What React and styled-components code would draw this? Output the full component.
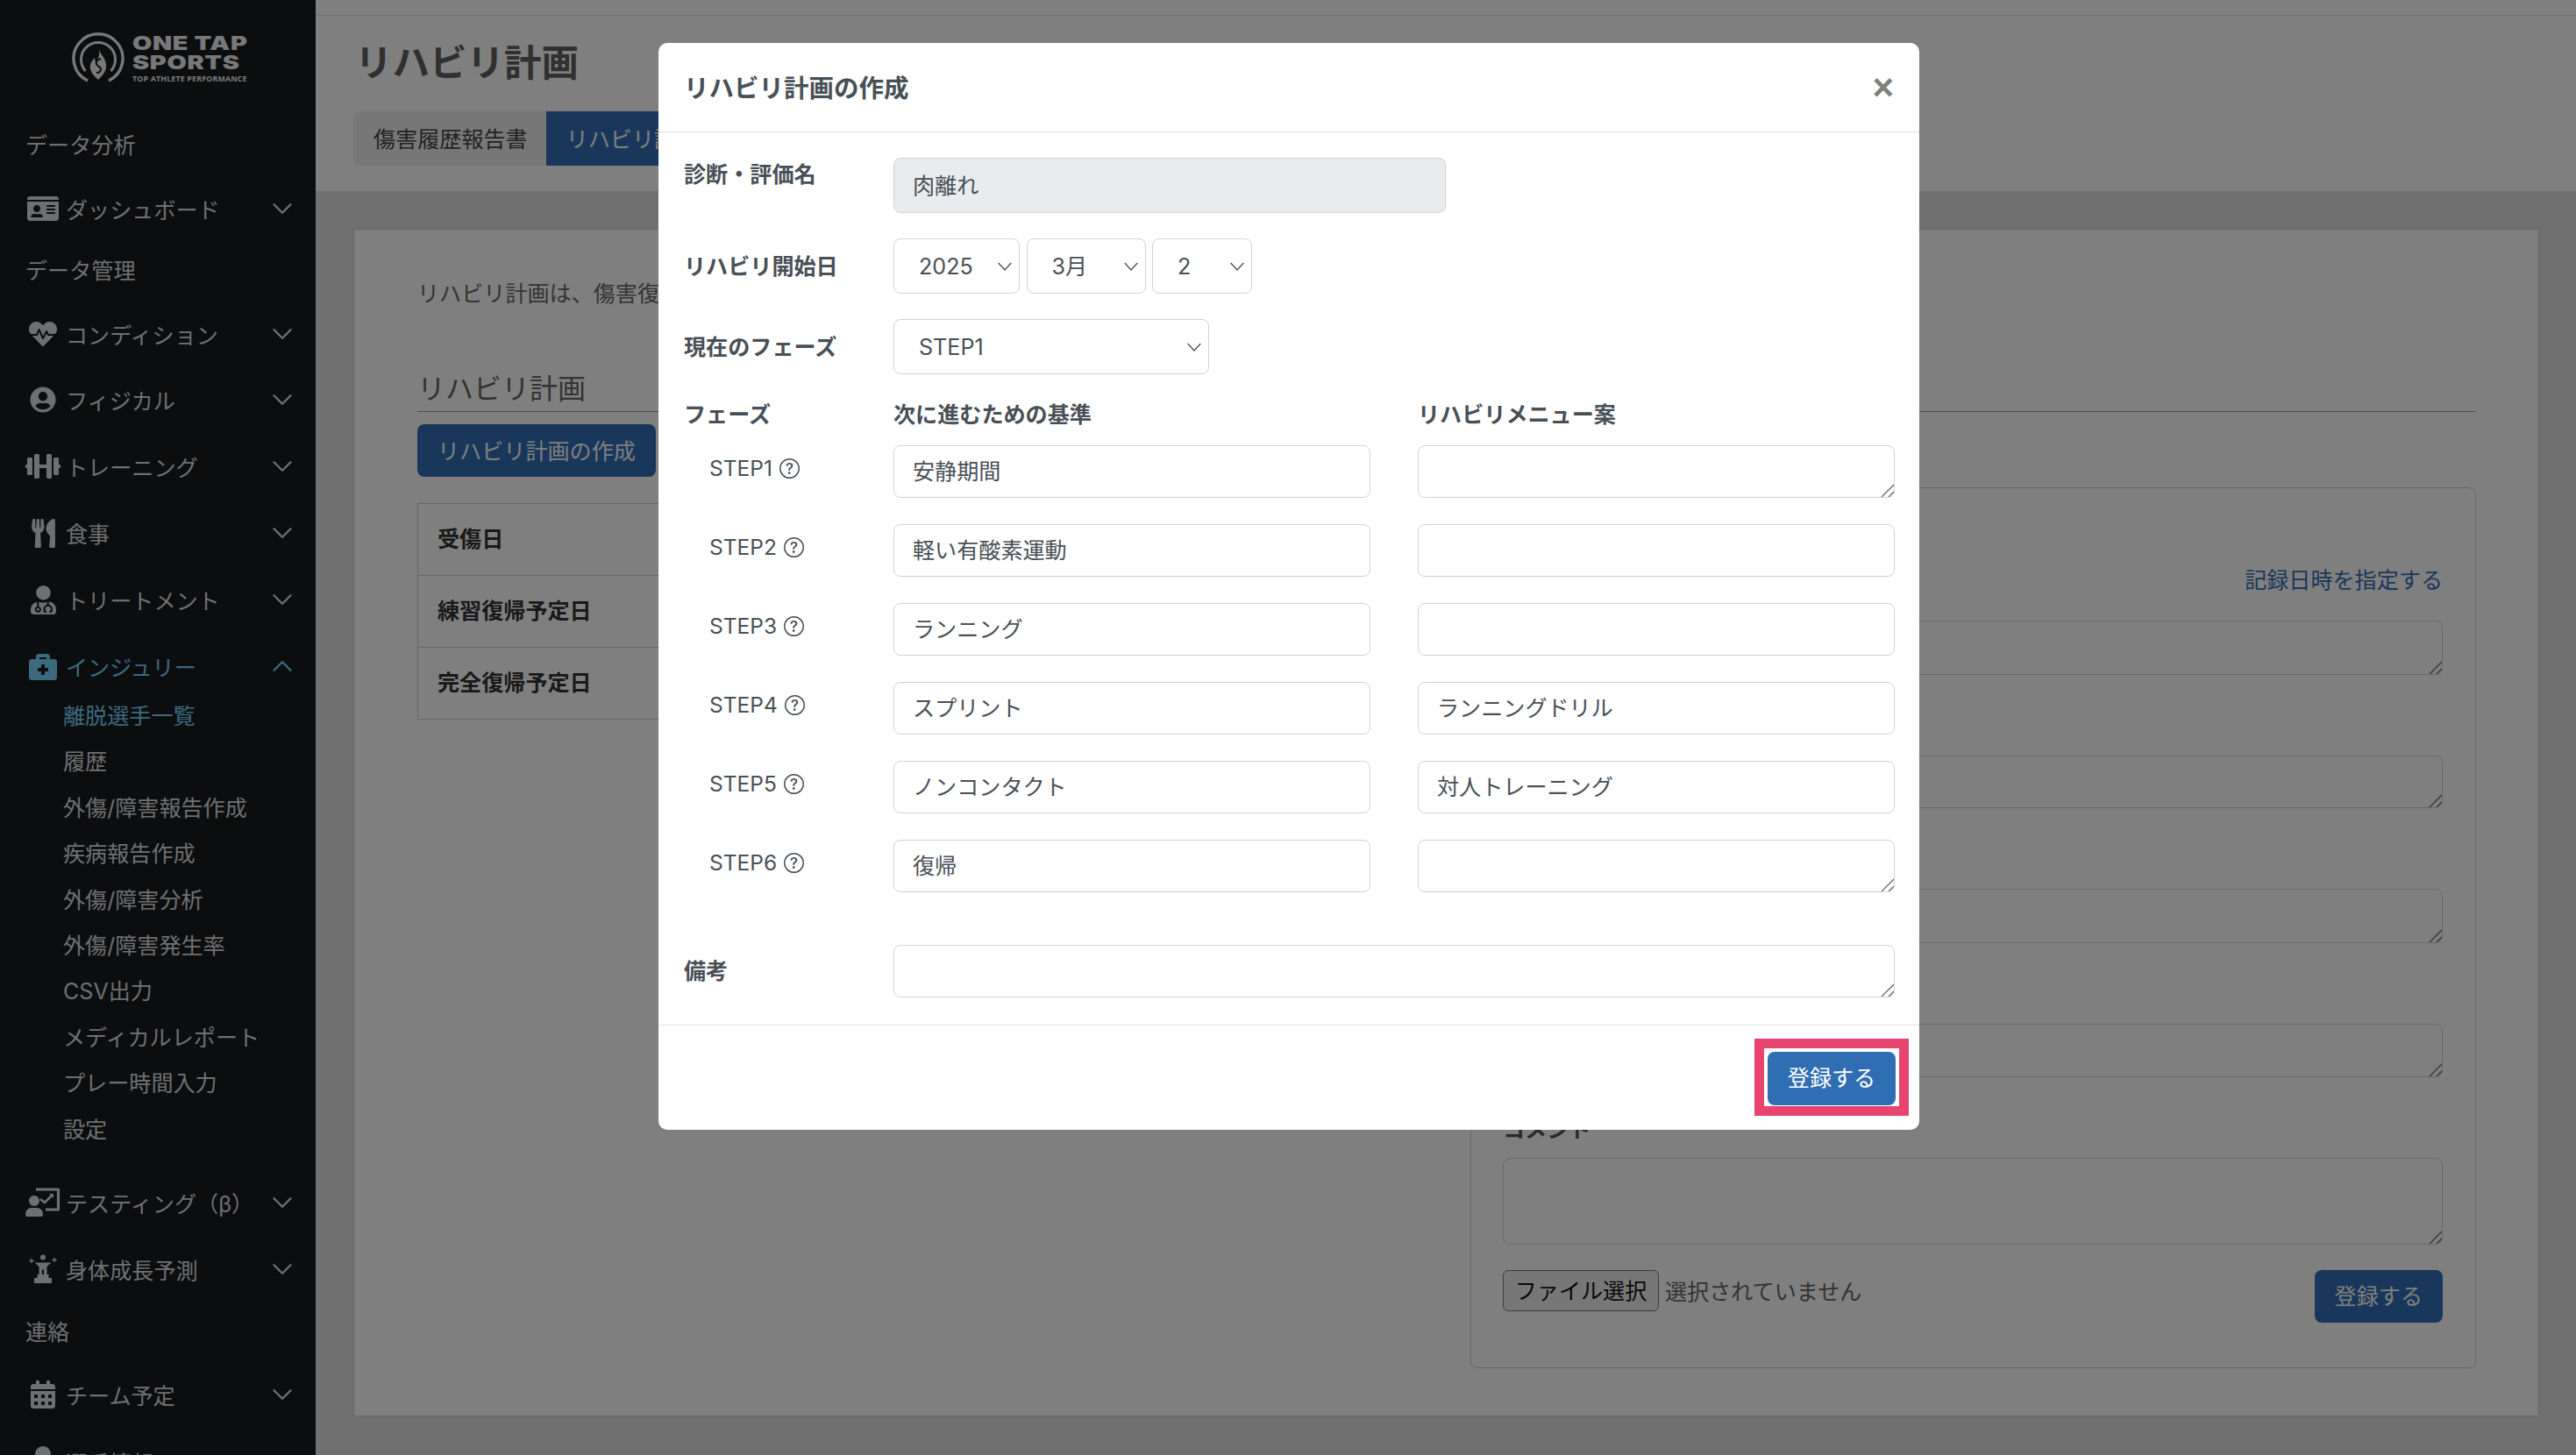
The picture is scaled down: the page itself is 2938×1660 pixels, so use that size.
import React from "react";
import styled, { createGlobalStyle } from "styled-components";
import { ChevronDown, ChevronUp } from "lucide-react";
import {
  FaIdCard,
  FaHeartbeat,
  FaUserCircle,
  FaDumbbell,
  FaUtensils,
  FaUserMd,
  FaBriefcaseMedical,
  FaCalendarAlt,
  FaUser,
} from "react-icons/fa";
import { BsQuestionCircle } from "react-icons/bs";

const GlobalStyle = createGlobalStyle`
  html, body {
    margin: 0;
    height: 100%;
    overflow: hidden;
  }
  body {
    font-family: Inter, "Noto Sans CJK JP", sans-serif;
    font-size: 25.1px;
    color: #495057;
  }
  * {
    box-sizing: border-box;
  }
`;

const chevron =
  "url(\"data:image/svg+xml,%3csvg xmlns='http://www.w3.org/2000/svg' viewBox='0 0 16 16'%3e%3cpath fill='none' stroke='%23495057' stroke-width='1.2' d='M1.5 4.5 8 11.5l6.5-7'/%3e%3c/svg%3e\")";

const grip =
  "url(\"data:image/svg+xml,%3csvg xmlns='http://www.w3.org/2000/svg' viewBox='0 0 15 15'%3e%3cpath stroke='%23666' stroke-width='1.3' d='M1 15 15 1M9 15 15 9'/%3e%3c/svg%3e\")";

const TestingIcon = () => (
  <svg width="40" height="33" viewBox="0 0 40 33" fill="currentColor">
    <path d="M12 2h25.5v23H23" fill="none" stroke="currentColor" strokeWidth="3.2" strokeLinejoin="round" />
    <path d="M17 13l5 4 9-9" fill="none" stroke="currentColor" strokeWidth="2.6" />
    <path d="M27 7h5v5z" />
    <circle cx="10" cy="15" r="6" />
    <path d="M0 30a7 7 0 0 1 7-7h6a7 7 0 0 1 7 7v1a2 2 0 0 1-2 2H2a2 2 0 0 1-2-2z" />
  </svg>
);

const GrowthIcon = () => (
  <svg width="32" height="33" viewBox="0 0 32 33" fill="currentColor">
    <circle cx="16" cy="3.6" r="3" />
    <path d="M6.5 9.5h19l-5 4.5v9.5h-3.4v-6h-2.2v6h-3.4V14z" />
    <rect x="6" y="27" width="20" height="6" rx="0.6" />
    <rect x="9.5" y="23" width="13" height="4" />
    <path d="M3 4l.9 2.6L6.4 7.5l-2.5.9L3 11l-.9-2.6L-.4 7.5l2.5-.9zM29 3l.9 2.6 2.5.9-2.5.9L29 10l-.9-2.6-2.5-.9 2.5-.9z" />
  </svg>
);

const LogoMark = () => (
  <svg width="60" height="60" viewBox="0 0 60 60">
    <path d="M18 56A28 28 0 1 1 42 56" fill="none" stroke="currentColor" strokeWidth="3.4" />
    <path d="M15.5 45A19.5 19.5 0 1 1 44.5 45" fill="none" stroke="currentColor" strokeWidth="3" />
    <path d="M31 20c1 6 9 11 8 21-1 6-5 10-9 14-4-4-8-7-9-13-1-5 2-9 5-12 0 3 1 4 2 5 2-4 4-9 3-15z" fill="currentColor" />
    <path d="M33 31c-4 1-6 3-5 6s5 3 5 6-2 4-5 4" fill="none" stroke="#161a1c" strokeWidth="2" />
  </svg>
);

const NAV_TOP = [
  { label: "データ分析", h: 72, section: true },
  { label: "ダッシュボード", h: 72, icon: <FaIdCard size={36} /> },
  { label: "データ管理", h: 70, section: true },
  { label: "コンディション", h: 74, icon: <FaHeartbeat size={32} /> },
  { label: "フィジカル", h: 76, icon: <FaUserCircle size={30} /> },
  { label: "トレーニング", h: 76, icon: <FaDumbbell size={40} /> },
  { label: "食事", h: 76, icon: <FaUtensils size={33} /> },
  { label: "トリートメント", h: 76, icon: <FaUserMd size={33} /> },
  { label: "インジュリー", h: 75, active: true, icon: <FaBriefcaseMedical size={32} /> },
];

const NAV_SUB = [
  "離脱選手一覧",
  "履歴",
  "外傷/障害報告作成",
  "疾病報告作成",
  "外傷/障害分析",
  "外傷/障害発生率",
  "CSV出力",
  "メディカルレポート",
  "プレー時間入力",
  "設定",
];

const NAV_BOTTOM = [
  { label: "テスティング（β）", h: 74, icon: <TestingIcon /> },
  { label: "身体成長予測", h: 78, icon: <GrowthIcon /> },
  { label: "連絡", h: 66, section: true },
  { label: "チーム予定", h: 76, icon: <FaCalendarAlt size={32} /> },
  { label: "選手情報", h: 78, icon: <FaUser size={36} /> },
];

const STEPS = [
  { name: "STEP1", criteria: "安静期間", menu: "", area: true },
  { name: "STEP2", criteria: "軽い有酸素運動", menu: "" },
  { name: "STEP3", criteria: "ランニング", menu: "" },
  { name: "STEP4", criteria: "スプリント", menu: "ランニングドリル" },
  { name: "STEP5", criteria: "ノンコンタクト", menu: "対人トレーニング" },
  { name: "STEP6", criteria: "復帰", menu: "", area: true },
];

const NavRow = ({ item }) => {
  if (item.section) {
    return <SectionLabel $h={item.h}>{item.label}</SectionLabel>;
  }
  return (
    <NavItem $h={item.h} $active={item.active}>
      <NavIcon>{item.icon}</NavIcon>
      <NavText>{item.label}</NavText>
      {item.active ? <ChevronUp size={38} strokeWidth={1.5} /> : <ChevronDown size={38} strokeWidth={1.5} />}
    </NavItem>
  );
};

const App = () => {
  return (
    <Page>
      <GlobalStyle />
      <Sidebar>
        <LogoBlock>
          <LogoMark />
          <LogoWords>
            <LogoLine>ONE TAP</LogoLine>
            <LogoLine>SPORTS</LogoLine>
            <LogoTag>TOP ATHLETE PERFORMANCE</LogoTag>
          </LogoWords>
        </LogoBlock>
        {NAV_TOP.map((item) => (
          <NavRow key={item.label} item={item} />
        ))}
        <SubList>
          {NAV_SUB.map((label, i) => (
            <SubItem key={label} $active={i === 0}>
              {label}
            </SubItem>
          ))}
        </SubList>
        {NAV_BOTTOM.map((item) => (
          <NavRow key={item.label} item={item} />
        ))}
      </Sidebar>

      <Main>
        <TopBar />
        <PageHead>
          <PageTitle>リハビリ計画</PageTitle>
          <Tabs>
            <Tab>傷害履歴報告書</Tab>
            <Tab $active>リハビリ計画</Tab>
          </Tabs>
        </PageHead>

        <Card>
          <Intro>リハビリ計画は、傷害復帰までの計画を作成する機能です。</Intro>
          <SectionHeading>リハビリ計画</SectionHeading>
          <Columns>
            <div>
              <PrimaryButton>リハビリ計画の作成</PrimaryButton>
              <InfoTable>
                <tbody>
                  <tr>
                    <th>受傷日</th>
                    <td />
                  </tr>
                  <tr>
                    <th>練習復帰予定日</th>
                    <td />
                  </tr>
                  <tr>
                    <th>完全復帰予定日</th>
                    <td />
                  </tr>
                </tbody>
              </InfoTable>
            </div>
            <RecordPanel>
              <RecordLink>記録日時を指定する</RecordLink>
              <NoteArea $mt={27.5} $h={62} />
              <NoteArea $mt={92} $h={60} />
              <NoteArea $mt={92} $h={62} />
              <NoteArea $mt={92} $h={61} />
              <FieldLabel>コメント</FieldLabel>
              <NoteArea $h={99} />
              <FileRow>
                <FilePick>
                  <FileButton>ファイル選択</FileButton>
                  <span>選択されていません</span>
                </FilePick>
                <PrimaryButton>登録する</PrimaryButton>
              </FileRow>
            </RecordPanel>
          </Columns>
        </Card>
      </Main>

      <Overlay>
        <Modal>
          <ModalHeader>
            <ModalTitle>リハビリ計画の作成</ModalTitle>
            <CloseMark>×</CloseMark>
          </ModalHeader>
          <ModalBody>
            <FormRow>
              <FormLabel>診断・評価名</FormLabel>
              <TextInput $w={630} $h={63} $disabled readOnly value="肉離れ" />
            </FormRow>
            <FormRow $center>
              <FormLabel>リハビリ開始日</FormLabel>
              <SelectGroup>
                <Select $w={144} defaultValue="2025">
                  <option>2025</option>
                </Select>
                <Select $w={136} defaultValue="3月">
                  <option>3月</option>
                </Select>
                <Select $w={114} defaultValue="2">
                  <option>2</option>
                </Select>
              </SelectGroup>
            </FormRow>
            <FormRow $center>
              <FormLabel>現在のフェーズ</FormLabel>
              <Select $w={360} defaultValue="STEP1">
                <option>STEP1</option>
              </Select>
            </FormRow>

            <StepHead>
              <span>フェーズ</span>
              <span>次に進むための基準</span>
              <span>リハビリメニュー案</span>
            </StepHead>
            {STEPS.map((step) => (
              <StepRow key={step.name}>
                <StepName>
                  {step.name}
                  <BsQuestionCircle size={23} />
                </StepName>
                <TextInput readOnly value={step.criteria} />
                {step.area ? <MenuArea /> : <TextInput readOnly value={step.menu} />}
              </StepRow>
            ))}

            <NotesRow>
              <FormLabel>備考</FormLabel>
              <MenuArea />
            </NotesRow>
          </ModalBody>
          <ModalFooter>
            <Highlight>
              <SubmitButton>登録する</SubmitButton>
            </Highlight>
          </ModalFooter>
        </Modal>
      </Overlay>
    </Page>
  );
};

export default App;

const Page = styled.div`
  display: flex;
  width: 100%;
  height: 100vh;
  overflow: hidden;
  position: relative;
`;

const Sidebar = styled.aside`
  flex: 0 0 360px;
  height: 100%;
  overflow: hidden;
  background-color: #161a1c;
  color: #dcdfe2;
`;

const LogoBlock = styled.div`
  display: flex;
  height: 130px;
  padding: 36px 0 0 82px;
  gap: 9px;
  color: #f0f0f0;
`;

const LogoWords = styled.div`
  display: flex;
  flex-direction: column;
  padding-top: 3px;
`;

const LogoLine = styled.div`
  font-family: Inter, sans-serif;
  font-weight: 900;
  font-size: 21.5px;
  line-height: 21.5px;
  letter-spacing: 0.5px;
  transform: scaleX(1.34);
  transform-origin: left;
  white-space: nowrap;
`;

const LogoTag = styled.div`
  font-family: "Open Sans", sans-serif;
  font-weight: 700;
  font-size: 8.9px;
  line-height: 12px;
  margin-top: 2px;
  white-space: nowrap;
  letter-spacing: 0.15px;
`;

const SectionLabel = styled.div`
  height: ${(p) => p.$h}px;
  line-height: ${(p) => p.$h}px;
  padding-left: 29px;
`;

const NavItem = styled.div`
  display: flex;
  align-items: center;
  height: ${(p) => p.$h}px;
  padding: 0 19px 0 30px;
  color: ${(p) => (p.$active ? "#7ad2ff" : "inherit")};
`;

const NavIcon = styled.span`
  flex: 0 0 38px;
  min-width: 0;
  display: flex;
  align-items: center;
  justify-content: center;
  margin-right: 7px;
  svg {
    flex: none;
  }
`;

const NavText = styled.span`
  flex: 1;
  white-space: nowrap;
`;

const SubList = styled.div`
  margin: -6px 0 20px;
`;

const SubItem = styled.div`
  height: 52.4px;
  line-height: 52.4px;
  padding-left: 72px;
  white-space: nowrap;
  color: ${(p) => (p.$active ? "#7ad2ff" : "inherit")};
`;

const Main = styled.main`
  flex: 1;
  min-width: 0;
  height: 100%;
  overflow: hidden;
  background-color: #e0e0e0;
`;

const TopBar = styled.div`
  height: 18px;
  background-color: #fff;
  border-bottom: 1px solid #e4e4e4;
`;

const PageHead = styled.div`
  height: 200px;
  padding: 29px 43px 0;
  background-color: #fff;
`;

const PageTitle = styled.h1`
  margin: 0 0 30px;
  padding-left: 2px;
  height: 50px;
  font-size: 42.5px;
  line-height: 50px;
  font-weight: 700;
  color: #606060;
`;

const Tabs = styled.div`
  display: flex;
  height: 62px;
`;

const Tab = styled.div`
  display: flex;
  align-items: center;
  padding: 0 21px 3px 23px;
  color: ${(p) => (p.$active ? "#fff" : "#444")};
  background-color: ${(p) => (p.$active ? "#306eb4" : "#efefef")};
  border-radius: ${(p) => (p.$active ? "0" : "8px 0 0 8px")};
`;

const Card = styled.section`
  height: 1355px;
  margin: 43px 42px 0 43px;
  padding: 56px 72px 0 72px;
  background-color: #fff;
  border: 1px solid #ccc;
`;

const Intro = styled.p`
  margin: 0 0 71px;
  line-height: 34px;
  color: #666;
`;

const SectionHeading = styled.h2`
  margin: 0;
  padding: 0 0 4px;
  font-size: 32px;
  line-height: 42px;
  font-weight: 400;
  color: #666;
  border-bottom: 1.5px solid #999;
`;

const Columns = styled.div`
  display: grid;
  grid-template-columns: 1165px 1147px;
  column-gap: 36px;
  margin-top: 14px;
`;

const PrimaryButton = styled.button`
  display: block;
  height: 60px;
  padding: 0 23px 3px;
  font: inherit;
  color: #fff;
  background-color: #306eb4;
  border: none;
  border-radius: 8px;
`;

const InfoTable = styled.table`
  width: 100%;
  margin-top: 30px;
  border-collapse: collapse;
  th,
  td {
    height: 82px;
    border: 1px solid #ccc;
  }
  th {
    width: 300px;
    padding: 0 0 6px 22px;
    text-align: left;
    font-weight: 700;
    color: #333;
  }
`;

const RecordPanel = styled.div`
  height: 1005px;
  margin-top: 72px;
  padding: 87px 37px 0 36px;
  border: 1px solid #ccc;
  border-radius: 8px;
`;

const RecordLink = styled.div`
  height: 36px;
  line-height: 36px;
  text-align: right;
  color: #306eb4;
`;

const NoteArea = styled.textarea`
  display: block;
  width: 100%;
  height: ${(p) => p.$h}px;
  margin-top: ${(p) => p.$mt || 0}px;
  background-color: #fff;
  border: 1.5px solid #ced4da;
  border-radius: 8px;
  outline: none;
  resize: vertical;
  &::-webkit-resizer {
    background-image: ${grip};
  }
`;

const FieldLabel = styled.div`
  height: 40px;
  margin: 40px 0 12px;
  line-height: 40px;
  font-weight: 700;
  color: #555;
`;

const FileRow = styled.div`
  display: flex;
  justify-content: space-between;
  align-items: flex-start;
  margin-top: 29px;
`;

const FilePick = styled.div`
  display: flex;
  align-items: center;
  gap: 7px;
  color: #666;
`;

const FileButton = styled.button`
  height: 47px;
  width: 178px;
  padding: 0 0 2px;
  font: inherit;
  color: #111;
  background-color: #efefef;
  border: 1.5px solid #767676;
  border-radius: 6px;
`;

const Overlay = styled.div`
  position: absolute;
  inset: 0;
  z-index: 10;
  padding: 49px 0 0 2px;
  background-color: rgba(0, 0, 0, 0.5);
`;

const Modal = styled.div`
  width: 1438px;
  height: 1240px;
  margin: 0 auto;
  background-color: #fff;
  border-radius: 10px;
  overflow: hidden;
`;

const ModalHeader = styled.div`
  display: flex;
  align-items: center;
  justify-content: space-between;
  height: 102px;
  padding: 0 30px 0 29px;
  border-bottom: 1.5px solid #dee2e6;
`;

const ModalTitle = styled.h3`
  margin: 0 0 2px;
  font-size: 28.5px;
  font-weight: 700;
  color: #495057;
`;

const CloseMark = styled.span`
  margin-right: -1px;
  font-family: "Liberation Sans", sans-serif;
  font-size: 42px;
  line-height: 42px;
  font-weight: 700;
  color: #808080;
`;

const ModalBody = styled.div`
  height: 1018px;
  padding: 29px 28px 0 29px;
`;

const FormRow = styled.div`
  display: grid;
  grid-template-columns: 239px 1fr;
  align-items: ${(p) => (p.$center ? "center" : "start")};
  margin-bottom: 29px;
`;

const FormLabel = styled.label`
  font-weight: 700;
  line-height: 38px;
  color: #495057;
`;

const TextInput = styled.input`
  width: ${(p) => (p.$w ? `${p.$w}px` : "100%")};
  height: ${(p) => p.$h || 60}px;
  padding: 0 21px 4px;
  font: inherit;
  color: #495057;
  background-color: ${(p) => (p.$disabled ? "#e9ecef" : "#fff")};
  border: 1.5px solid #ced4da;
  border-radius: 8px;
  outline: none;
`;

const SelectGroup = styled.div`
  display: flex;
  gap: 7.5px;
`;

const Select = styled.select`
  width: ${(p) => p.$w}px;
  height: 63px;
  padding: 0 34px 0 28px;
  font: inherit;
  color: #495057;
  background-color: #fff;
  background-image: ${chevron};
  background-repeat: no-repeat;
  background-position: right 7px center;
  background-size: 18px 18px;
  border: 1.5px solid #ced4da;
  border-radius: 8px;
  outline: none;
  appearance: none;
`;

const StepHead = styled.div`
  display: grid;
  grid-template-columns: 239px 544px 54px 544px;
  height: 34px;
  margin-bottom: 18px;
  line-height: 34px;
  font-weight: 700;
  color: #495057;
  > :nth-child(3) {
    grid-column: 4;
    white-space: nowrap;
  }
`;

const StepRow = styled.div`
  display: grid;
  grid-template-columns: 239px 544px 54px 544px;
  margin-bottom: 30px;
  > :nth-child(3) {
    grid-column: 4;
  }
`;

const StepName = styled.div`
  display: flex;
  align-items: center;
  gap: 8px;
  height: 52px;
  padding-left: 29px;
  font-size: 24.5px;
  color: #495057;
`;

const MenuArea = styled.textarea`
  display: block;
  width: 100%;
  height: 60px;
  background-color: #fff;
  border: 1.5px solid #ced4da;
  border-radius: 8px;
  outline: none;
  resize: vertical;
  &::-webkit-resizer {
    background-image: ${grip};
  }
`;

const NotesRow = styled.div`
  display: grid;
  grid-template-columns: 239px 1fr;
  align-items: center;
  margin-top: 60px;
`;

const ModalFooter = styled.div`
  display: flex;
  justify-content: flex-end;
  height: 120px;
  padding: 15px 12px 0 0;
  border-top: 1.5px solid #dee2e6;
`;

const Highlight = styled.div`
  height: 88px;
  padding: 4px 4px 1px;
  border: 11px solid #e7446f;
`;

const SubmitButton = styled.button`
  display: block;
  width: 146px;
  height: 61px;
  padding: 0 0 5px;
  font: inherit;
  color: #fff;
  background-color: #306eb4;
  border: none;
  border-radius: 8px;
`;
